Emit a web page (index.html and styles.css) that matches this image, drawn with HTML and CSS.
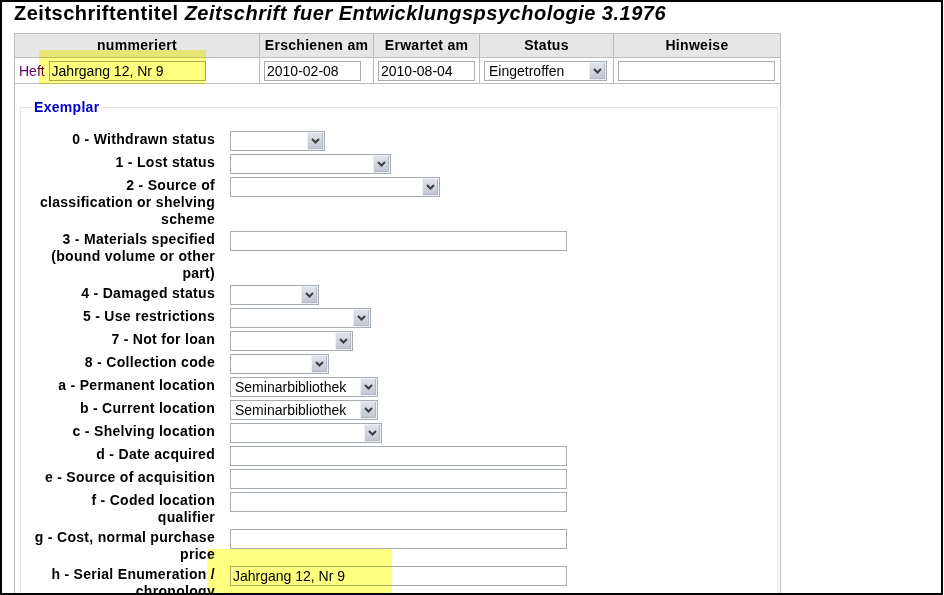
FILE: index.html
```html
<!DOCTYPE html>
<html lang="de">
<head>
    <meta charset="UTF-8">
    <title>Heft empfangen</title>
    <link rel="stylesheet" href="styles.css">
</head>
<body>
    <div class="frame">
        <h1>Zeitschriftentitel <em>Zeitschrift fuer Entwicklungspsychologie 3.1976</em></h1>

        <table class="issues">
            <colgroup>
                <col class="c-num">
                <col class="c-pub">
                <col class="c-exp">
                <col class="c-status">
                <col class="c-note">
            </colgroup>
            <thead>
                <tr>
                    <th>nummeriert</th>
                    <th>Erschienen am</th>
                    <th>Erwartet am</th>
                    <th>Status</th>
                    <th>Hinweise</th>
                </tr>
            </thead>
            <tbody>
                <tr class="issue-row">
                    <td><span class="heft">Heft</span> <input class="txt num" type="text" value="Jahrgang 12, Nr 9"></td>
                    <td><input class="txt date" type="text" value="2010-02-08"></td>
                    <td><input class="txt date" type="text" value="2010-08-04"></td>
                    <td>
                        <span class="select sel-status">
                            <select><option>Eingetroffen</option></select>
                            <span class="drop"><svg width="9" height="6" viewBox="0 0 9 6"><path d="M1 1l3.5 3.5L8 1" fill="none" stroke="#3c3c3c" stroke-width="2"/></svg></span>
                        </span>
                    </td>
                    <td><input class="txt note" type="text"></td>
                </tr>
                <tr>
                    <td colspan="5" class="item-cell">
                        <!-- Exemplardaten (952) -->
                        <fieldset class="item">
                            <legend>Exemplar</legend>
                            <ol>
                                <li>
                                    <label>0 - Withdrawn status</label>
                                    <span class="select sel-0"><select><option></option></select><span class="drop"><svg width="9" height="6" viewBox="0 0 9 6"><path d="M1 1l3.5 3.5L8 1" fill="none" stroke="#3c3c3c" stroke-width="2"/></svg></span></span>
                                </li>
                                <li>
                                    <label>1 - Lost status</label>
                                    <span class="select sel-1"><select><option></option></select><span class="drop"><svg width="9" height="6" viewBox="0 0 9 6"><path d="M1 1l3.5 3.5L8 1" fill="none" stroke="#3c3c3c" stroke-width="2"/></svg></span></span>
                                </li>
                                <li>
                                    <label>2 - Source of classification or shelving scheme</label>
                                    <span class="select sel-2"><select><option></option></select><span class="drop"><svg width="9" height="6" viewBox="0 0 9 6"><path d="M1 1l3.5 3.5L8 1" fill="none" stroke="#3c3c3c" stroke-width="2"/></svg></span></span>
                                </li>
                                <li>
                                    <label>3 - Materials specified (bound volume or other part)</label>
                                    <input class="txt wide" type="text">
                                </li>
                                <li>
                                    <label>4 - Damaged status</label>
                                    <span class="select sel-4"><select><option></option></select><span class="drop"><svg width="9" height="6" viewBox="0 0 9 6"><path d="M1 1l3.5 3.5L8 1" fill="none" stroke="#3c3c3c" stroke-width="2"/></svg></span></span>
                                </li>
                                <li>
                                    <label>5 - Use restrictions</label>
                                    <span class="select sel-5"><select><option></option></select><span class="drop"><svg width="9" height="6" viewBox="0 0 9 6"><path d="M1 1l3.5 3.5L8 1" fill="none" stroke="#3c3c3c" stroke-width="2"/></svg></span></span>
                                </li>
                                <li>
                                    <label>7 - Not for loan</label>
                                    <span class="select sel-7"><select><option></option></select><span class="drop"><svg width="9" height="6" viewBox="0 0 9 6"><path d="M1 1l3.5 3.5L8 1" fill="none" stroke="#3c3c3c" stroke-width="2"/></svg></span></span>
                                </li>
                                <li>
                                    <label>8 - Collection code</label>
                                    <span class="select sel-8"><select><option></option></select><span class="drop"><svg width="9" height="6" viewBox="0 0 9 6"><path d="M1 1l3.5 3.5L8 1" fill="none" stroke="#3c3c3c" stroke-width="2"/></svg></span></span>
                                </li>
                                <li>
                                    <label>a - Permanent location</label>
                                    <span class="select sel-loc"><select><option>Seminarbibliothek</option></select><span class="drop"><svg width="9" height="6" viewBox="0 0 9 6"><path d="M1 1l3.5 3.5L8 1" fill="none" stroke="#3c3c3c" stroke-width="2"/></svg></span></span>
                                </li>
                                <li>
                                    <label>b - Current location</label>
                                    <span class="select sel-loc"><select><option>Seminarbibliothek</option></select><span class="drop"><svg width="9" height="6" viewBox="0 0 9 6"><path d="M1 1l3.5 3.5L8 1" fill="none" stroke="#3c3c3c" stroke-width="2"/></svg></span></span>
                                </li>
                                <li>
                                    <label>c - Shelving location</label>
                                    <span class="select sel-c"><select><option></option></select><span class="drop"><svg width="9" height="6" viewBox="0 0 9 6"><path d="M1 1l3.5 3.5L8 1" fill="none" stroke="#3c3c3c" stroke-width="2"/></svg></span></span>
                                </li>
                                <li>
                                    <label>d - Date acquired</label>
                                    <input class="txt wide" type="text">
                                </li>
                                <li>
                                    <label>e - Source of acquisition</label>
                                    <input class="txt wide" type="text">
                                </li>
                                <li>
                                    <label>f - Coded location qualifier</label>
                                    <input class="txt wide" type="text">
                                </li>
                                <li>
                                    <label>g - Cost, normal purchase price</label>
                                    <input class="txt wide" type="text">
                                </li>
                                <li>
                                    <label>h - Serial Enumeration / chronology</label>
                                    <input class="txt wide" type="text" value="Jahrgang 12, Nr 9">
                                </li>
                            </ol>
                        </fieldset>
                    </td>
                </tr>
            </tbody>
        </table>

        <!-- Markierungen -->
        <div class="mark mark-top"></div>
        <div class="mark mark-bottom"></div>
    </div>
</body>
</html>
```

FILE: styles.css
```css
* {
    box-sizing: border-box;
}

body {
    margin: 0;
    background: #fff;
    font-family: "Liberation Sans", Arial, sans-serif;
    font-size: 14px;
    color: #000;
}

.frame {
    position: relative;
    width: 943px;
    height: 595px;
    border: 2px solid #000;
    padding: 0 0 0 12px;
    overflow: hidden;
}

h1 {
    margin: 0 0 8px 0;
    font-size: 20px;
    line-height: 23px;
    letter-spacing: 0.5px;
    font-weight: bold;
    white-space: nowrap;
}

/* Tabelle oben */
.issues {
    border-collapse: collapse;
    table-layout: fixed;
    width: 766px;
    border: 1px solid #bcbcbc;
}

.c-num { width: 245px; }
.c-pub { width: 114px; }
.c-exp { width: 106px; }
.c-status { width: 134px; }
.c-note { width: 167px; }

.issues th {
    background: #e6e6e6;
    border: 1px solid #bcbcbc;
    padding: 3px 4px;
    line-height: 17px;
    font-weight: bold;
    letter-spacing: 0.3px;
    text-align: center;
}

.issues td {
    border: 1px solid #bcbcbc;
    padding: 3px 4px 2px;
    vertical-align: middle;
    white-space: nowrap;
}

.heft {
    color: #660066;
    vertical-align: middle;
}

.txt {
    height: 20px;
    border: 1px solid #a5acb2;
    padding: 0 2px;
    font-family: "Liberation Sans", Arial, sans-serif;
    font-size: 14px;
    color: #000;
    background: #fff;
    vertical-align: middle;
    outline: none;
}

.num { width: 157px; }
.date { width: 97px; }
.note { width: 157px; }
.wide { width: 337px; }

/* Auswahllisten */
.select {
    display: inline-flex;
    height: 20px;
    border: 1px solid #a5acb2;
    background: #fff;
    vertical-align: middle;
}

.select select {
    -webkit-appearance: none;
    appearance: none;
    flex: 1;
    min-width: 0;
    height: 18px;
    border: 0;
    padding: 0 0 0 4px;
    background: transparent;
    font-family: "Liberation Sans", Arial, sans-serif;
    font-size: 14px;
    color: #000;
    outline: none;
}

.drop {
    width: 17px;
    height: 18px;
    display: flex;
    align-items: center;
    justify-content: center;
    background: linear-gradient(#e0e3ea, #c2c6d1);
    border: 1px solid #eef0f4;
    box-shadow: inset -1px -1px 0 #b4b8c4;
}

.sel-status { width: 123px; }
.sel-0 { width: 95px; }
.sel-1 { width: 161px; }
.sel-2 { width: 210px; }
.sel-4 { width: 89px; }
.sel-5 { width: 141px; }
.sel-7 { width: 123px; }
.sel-8 { width: 99px; }
.sel-loc { width: 148px; }
.sel-c { width: 152px; }

/* Exemplar */
.issues td.item-cell {
    padding: 0 2px 0 5px;
    vertical-align: top;
}

.item {
    margin: 15px 0 0 0;
    padding: 0 0 0 11px;
    border: 1px solid #e3e3e3;
    height: 520px;
}

.item legend {
    padding: 0 2px;
    color: #0000cc;
    font-weight: bold;
    letter-spacing: 0.3px;
    line-height: 17px;
}

.item ol {
    list-style: none;
    margin: 15px 0 0 0;
    padding: 0;
}

.item li {
    display: flex;
    align-items: flex-start;
    margin-bottom: 3px;
}

.item label {
    width: 183px;
    flex: none;
    margin-right: 15px;
    text-align: right;
    font-weight: bold;
    letter-spacing: 0.3px;
    line-height: 17px;
    white-space: normal;
}

/* gelbe Hervorhebung */
.mark {
    position: absolute;
    background: #ffff80;
    mix-blend-mode: multiply;
    pointer-events: none;
}

.mark-top {
    left: 37px;
    top: 48px;
    width: 167px;
    height: 34px;
}

.mark-bottom {
    left: 205px;
    top: 547px;
    width: 185px;
    height: 50px;
}
```
